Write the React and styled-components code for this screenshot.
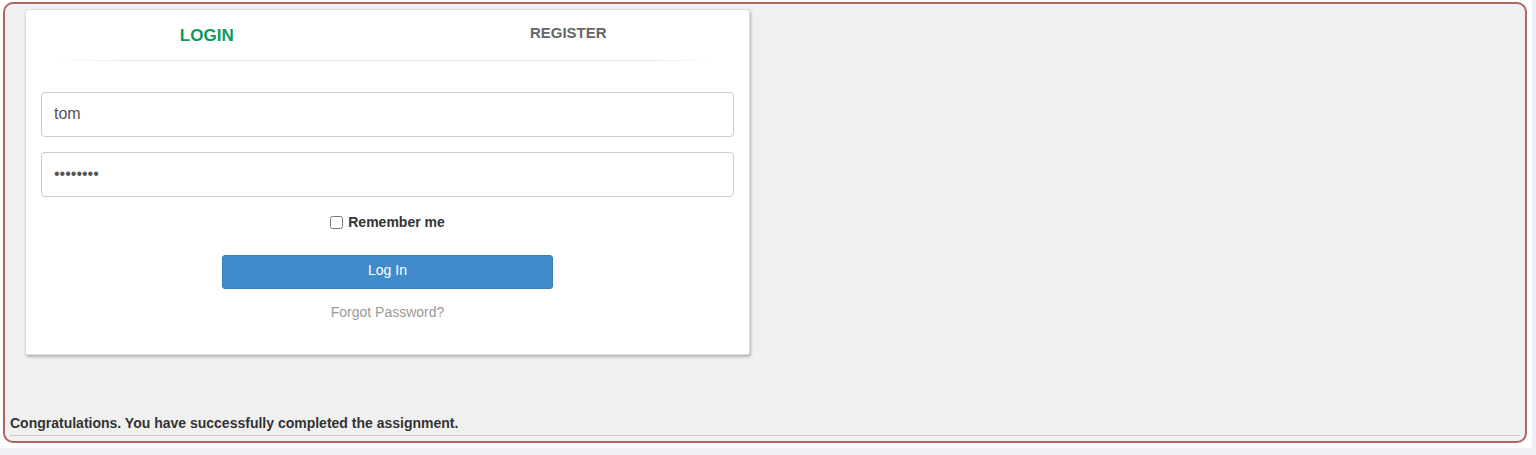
import React from 'react'
import styled, {createGlobalStyle} from 'styled-components';

const GlobalStyle = createGlobalStyle`
    html, body {
        margin: 0;
        padding: 0;
        background: #eff0f5;
        font-family: "Liberation Sans", Arial, sans-serif;
    }
`

const App = () => {
    return (
        <>
            <GlobalStyle />
            <Page>
                <AssignmentBox>
                    <Card>
                        <TabRow>
                            <Tab active>LOGIN</Tab>
                            <Tab>REGISTER</Tab>
                        </TabRow>
                        <TabDivider />
                        <Form onSubmit={(e) => e.preventDefault()}>
                            <TextInput type="text" defaultValue="tom" readOnly />
                            <TextInput type="password" defaultValue="tomcat12" readOnly />
                            <RememberRow>
                                <Checkbox type="checkbox" id="remember" />
                                <RememberLabel htmlFor="remember">Remember me</RememberLabel>
                            </RememberRow>
                            <LoginButton type="submit">Log In</LoginButton>
                            <ForgotLink href="#">Forgot Password?</ForgotLink>
                        </Form>
                    </Card>
                    <Footer>
                        <Feedback>Congratulations. You have successfully completed the assignment.</Feedback>
                        <Rule />
                    </Footer>
                </AssignmentBox>
            </Page>
        </>
    )
}

export default App;

const Page = styled.div`
    box-sizing: border-box;
    width: 1532px;
    height: 448px;
    background: #ffffff;
    padding: 2px 0 0 3px;
`

const AssignmentBox = styled.div`
    box-sizing: border-box;
    width: 1524px;
    height: 441px;
    border: 2px solid #b06565;
    border-radius: 10px;
    background: #f0f0f0;
    display: flex;
    flex-direction: column;
    padding: 5px;
`

const Card = styled.div`
    box-sizing: border-box;
    width: 725px;
    margin-left: 15px;
    background: #ffffff;
    border: 1px solid #dcdcdc;
    border-radius: 3px;
    box-shadow: 1px 2px 3px rgba(0, 0, 0, 0.25);
`

const TabRow = styled.div`
    display: flex;
    height: 50px;
`

const Tab = styled.div`
    flex: 1;
    text-align: center;
    font-weight: bold;
    line-height: 1;
    cursor: pointer;
    padding-top: ${props => props.active ? '17px' : '15px'};
    font-size: ${props => props.active ? '17px' : '15px'};
    color: ${props => props.active ? '#0a9b5c' : '#666666'};
`

const TabDivider = styled.div`
    height: 1px;
    margin: 0 30px;
    background: linear-gradient(to right, rgba(230, 230, 230, 0), #e6e6e6 12%, #e6e6e6 88%, rgba(230, 230, 230, 0));
`

const Form = styled.form`
    display: flex;
    flex-direction: column;
    align-items: center;
    padding: 31px 15px 34px;
`

const TextInput = styled.input`
    box-sizing: border-box;
    width: 100%;
    height: 45px;
    margin-bottom: 15px;
    padding: 0 12px 2px;
    border: 1px solid #cccccc;
    border-radius: 4px;
    font-family: "Liberation Sans", Arial, sans-serif;
    font-size: 16px;
    color: #555555;
    background: #ffffff;
    outline: none;
`

const RememberRow = styled.div`
    display: flex;
    align-items: center;
    height: 20px;
    margin-bottom: 23px;
`

const Checkbox = styled.input`
    width: 13px;
    height: 13px;
    margin: 0 5px 0 0;
`

const RememberLabel = styled.label`
    font-size: 14px;
    font-weight: bold;
    color: #333333;
`

const LoginButton = styled.button`
    box-sizing: border-box;
    width: 331px;
    height: 34px;
    padding: 0 0 4px;
    background: #428bca;
    border: 1px solid #357ebd;
    border-radius: 3px;
    color: #ffffff;
    font-family: "Liberation Sans", Arial, sans-serif;
    font-size: 14px;
    cursor: pointer;
    margin-bottom: 15px;
`

const ForgotLink = styled.a`
    font-size: 14px;
    line-height: 16px;
    color: #999999;
    text-decoration: none;
`

const Footer = styled.div`
    margin-top: auto;
`

const Feedback = styled.div`
    font-size: 14px;
    line-height: 16px;
    font-weight: bold;
    color: #333333;
`

const Rule = styled.div`
    height: 1px;
    margin-top: 4px;
    background: #cccccc;
`
